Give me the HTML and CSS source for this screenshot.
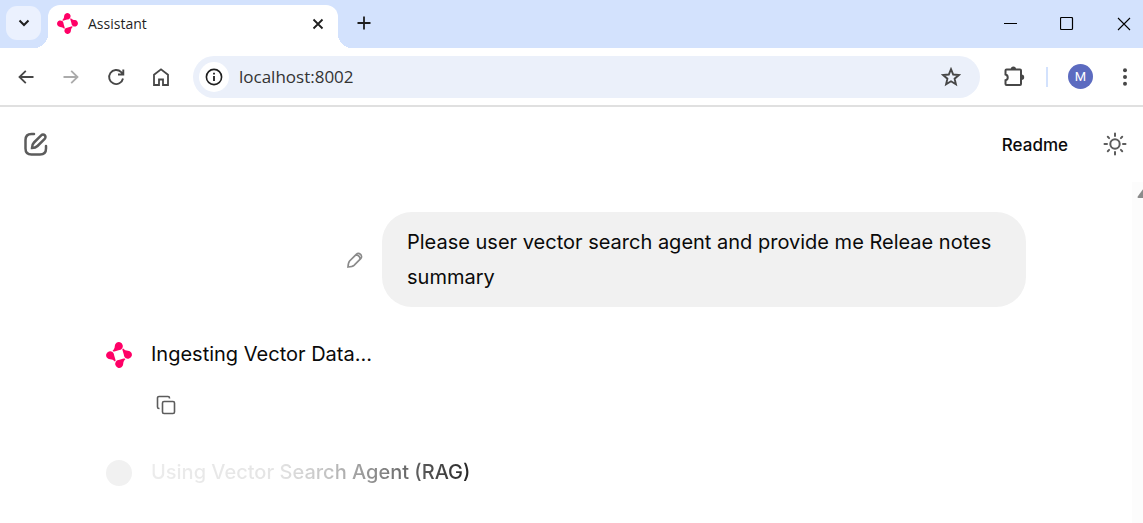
FILE: index.html
```html
<!DOCTYPE html>
<html lang="en">
<head>
    <meta charset="UTF-8">
    <meta name="viewport" content="width=device-width, initial-scale=1.0">
    <title>Assistant</title>
    <link rel="stylesheet" href="styles.css">
</head>
<body>
    <svg class="defs" aria-hidden="true">
        <symbol id="logo" viewBox="0 0 26 26">
            <g id="petal">
                <path d="M8.800 4A4 4 0 1 1 16 6.500C15.300 7.600 14 8 12.500 8.200L8.400 9.400Q6.800 10 6.600 8.800C8.200 7.400 8.700 6 8.800 4Z"/>
            </g>
            <use href="#petal" transform="rotate(90 13 13)"/>
            <use href="#petal" transform="rotate(180 13 13)"/>
            <use href="#petal" transform="rotate(270 13 13)"/>
        </symbol>
    </svg>

    <div class="tabstrip">
        <button class="tab-search" aria-label="Search tabs">
            <svg width="12" height="8" viewBox="0 0 12 8"><path d="M1.500 1.500L6 6l4.500-4.500" stroke-width="2"/></svg>
        </button>
        <div class="tab">
            <svg class="logo" width="21" height="21"><use href="#logo"/></svg>
            <span class="tab-title">Assistant</span>
            <button class="tab-close" aria-label="Close tab">
                <svg width="12" height="12" viewBox="0 0 12 12"><path d="M1.500 1.500l9 9M10.500 1.500l-9 9" stroke-width="1.800"/></svg>
            </button>
        </div>
        <button class="new-tab" aria-label="New tab">
            <svg width="14" height="14" viewBox="0 0 14 14"><path d="M7 .5v13M.5 7h13" stroke-width="1.800"/></svg>
        </button>
        <div class="window-buttons">
            <button aria-label="Minimize"><svg width="14" height="14" viewBox="0 0 14 14"><path d="M1 6.500h13" stroke-width="1"/></svg></button>
            <button aria-label="Maximize"><svg width="14" height="14" viewBox="0 0 14 14"><rect x=".5" y=".5" width="12" height="12" rx="1" stroke-width="1.200"/></svg></button>
            <button aria-label="Close"><svg width="14" height="14" viewBox="0 0 14 14"><path d="M1 1l12 12M13 1L1 13" stroke-width="1.100"/></svg></button>
        </div>
    </div>

    <div class="toolbar">
        <div class="nav">
            <button aria-label="Back"><svg width="18" height="18" viewBox="0 0 18 18"><path d="M16.500 9H2.500M8.800 2.800L2.500 9l6.300 6.200" stroke-width="1.800"/></svg></button>
            <button class="off" aria-label="Forward"><svg width="18" height="18" viewBox="0 0 18 18"><path d="M1.500 9h14M9.200 2.800L15.500 9l-6.300 6.200" stroke-width="1.800"/></svg></button>
            <button aria-label="Reload"><svg width="18" height="18" viewBox="0 0 18 18"><path d="M16 10.500A7 7 0 1 1 14.200 4.200L16 6M16.300 1.500V6.500H11" stroke-width="1.900"/></svg></button>
            <button aria-label="Home"><svg width="18" height="18" viewBox="0 0 18 18"><path d="M2 6.800L9 1.300l7 5.500V17h-5v-5.500H7V17H2z" stroke-width="1.800"/></svg></button>
        </div>
        <div class="omnibox">
            <button class="site-info" aria-label="Site information">
                <svg width="18" height="18" viewBox="0 0 18 18"><circle cx="9" cy="9" r="7.600" stroke-width="1.600"/><path d="M9 8v5M9 4.800v1.800" stroke-width="1.800"/></svg>
            </button>
            <input type="text" value="localhost:8002" aria-label="Address" spellcheck="false">
            <button class="star" aria-label="Bookmark">
                <svg width="20" height="20" viewBox="0 0 20 20"><path d="M10 2.200l2.200 5.300 5.700.5-4.300 3.700 1.300 5.600-4.900-3-4.900 3 1.300-5.600L2.100 8l5.700-.5z" stroke-width="1.900"/></svg>
            </button>
        </div>
        <button class="extensions" aria-label="Extensions">
            <svg width="22" height="22" viewBox="0 0 22 22"><path d="M3.500 3.500H17a1 1 0 0 1 1 1V18a1 1 0 0 1-1 1H3.500a1 1 0 0 1-1-1v-3.700a3 3 0 0 0 0-5.800v-4a1 1 0 0 1 1-1z" stroke-width="2"/><path class="fill" d="M7.800 3a2.600 2.600 0 0 1 5.200 0zM18.500 8.600a2.700 2.700 0 0 1 0 5.400z"/></svg>
        </button>
        <span class="divider"></span>
        <button class="profile" aria-label="Profile">M</button>
        <button class="menu" aria-label="Menu">
            <svg width="6" height="18" viewBox="0 0 6 18"><g class="fill"><circle cx="3" cy="2.200" r="2"/><circle cx="3" cy="9" r="2"/><circle cx="3" cy="15.800" r="2"/></g></svg>
        </button>
    </div>

    <header class="header">
        <button aria-label="New chat">
            <svg width="24" height="24" viewBox="0 0 24 24"><path d="M10 2H7.500C3.500 2 1.500 4 1.500 8v8.500c0 4 2 6 6 6H16c4 0 6-2 6-6V14" stroke-width="2.500"/><path d="M17.200 3.300L10 10.500c-1.400 1.400-2 3-2 5.500 2.500 0 4.100-.6 5.500-2l7.200-7.200c2.400-2.400-1.100-5.900-3.500-3.500z" stroke-width="2.500"/></svg>
        </button>
        <a class="readme" href="#readme">Readme</a>
        <button aria-label="Toggle theme">
            <svg width="24" height="24" viewBox="0 0 24 24"><circle cx="12" cy="12" r="4.700" stroke-width="2"/><path d="M12 1.500v2.500M12 20v2.500M1.500 12H4M20 12h2.500M4.800 4.800l1.300 1.300M17.900 17.900l1.300 1.300M4.800 19.200l1.300-1.300M17.900 6.100l1.300-1.300" stroke-width="2"/></svg>
        </button>
    </header>

    <div class="scroll-area">
        <main class="chat">
            <div class="user-message">
                <button class="edit" aria-label="Edit message">
                    <svg width="16" height="16" viewBox="0 0 16 16"><path d="M9.300 2.300L2.600 9C1.500 10.200 1.200 11.700 1 15c3.300-.2 4.800-.5 6-1.600l6.700-6.700c2.700-2.700-1.700-7.100-4.400-4.400zM8.700 3q4.200.1 4.400 4.300" stroke-width="1.700"/></svg>
                </button>
                <div class="bubble">Please user vector search agent and provide me Releae notes summary</div>
            </div>

            <div class="step">
                <svg class="logo" width="26" height="26"><use href="#logo"/></svg>
                <div class="step-text">Ingesting Vector Data...</div>
            </div>
            <div class="actions">
                <button aria-label="Copy">
                    <svg width="20" height="20" viewBox="0 0 20 20"><rect x="6.500" y="6.500" width="12" height="12" rx="1.500" stroke-width="1.600"/><path d="M3.500 13.500H3A1.500 1.500 0 0 1 1.500 12V3A1.500 1.500 0 0 1 3 1.500h9A1.500 1.500 0 0 1 13.500 3v.5" stroke-width="1.600"/></svg>
                </button>
            </div>

            <div class="step">
                <span class="avatar"></span>
                <div class="step-text loading">Using Vector Search Agent (RAG)</div>
            </div>
        </main>
        <div class="scrollbar">
            <svg width="14" height="10" viewBox="0 0 14 10"><path d="M6 1.200q1-1.200 2 0l5.300 7.300q.6 1.500-.8 1.500H1.500Q.1 10 .7 8.500z"/></svg>
        </div>
    </div>
</body>
</html>
```
FILE: styles.css
```css
* {
    box-sizing: border-box;
}

body {
    margin: 0;
    height: 100vh;
    display: flex;
    flex-direction: column;
    overflow: hidden;
    background-color: white;
    color: #0a0a0a;
    font-family: Inter, sans-serif;
}

button {
    display: flex;
    align-items: center;
    justify-content: center;
    padding: 0;
    border: none;
    background: none;
    color: inherit;
    font: inherit;
    cursor: pointer;
}

svg {
    flex: none;
    fill: none;
    stroke: currentColor;
}

.fill {
    fill: currentColor;
    stroke: none;
}

.defs {
    position: absolute;
    width: 0;
    height: 0;
}

.logo {
    fill: #ff0066;
    stroke: none;
}

/* tab strip */
.tabstrip {
    display: flex;
    align-items: center;
    flex: none;
    height: 48px;
    padding-left: 6px;
    background-color: #d3e2fd;
    color: #1f1f1f;
}

.tab-search {
    width: 35px;
    height: 34px;
    margin-bottom: 2px;
    border-radius: 11px;
    background-color: #ebf1fe;
}

.tab {
    position: relative;
    display: flex;
    align-items: center;
    align-self: flex-end;
    width: 290px;
    height: 43px;
    margin-left: 7px;
    padding: 0 11px 6px 9px;
    border-radius: 12px 12px 0 0;
    background-color: white;
}

/* curved feet of the active tab */
.tab::before,
.tab::after {
    content: "";
    position: absolute;
    bottom: 0;
    width: 14px;
    height: 14px;
}

.tab::before {
    right: 100%;
    background: radial-gradient(circle at 0 0, transparent 14px, white 14px);
}

.tab::after {
    left: 100%;
    background: radial-gradient(circle at 100% 0, transparent 14px, white 14px);
}

.tab-title {
    flex: 1;
    padding-left: 10px;
    font-family: "Open Sans", sans-serif;
    font-size: 14px;
}

.tab-close,
.new-tab {
    width: 18px;
    height: 18px;
}

.new-tab {
    margin: 0 0 2px 17px;
}

.window-buttons {
    display: flex;
    gap: 43px;
    margin-left: auto;
    padding-right: 12px;
    color: black;
}

/* toolbar */
.toolbar {
    display: flex;
    align-items: center;
    flex: none;
    height: 59px;
    padding: 0 15px 0 17px;
    border-bottom: 2px solid #e0e0e0;
    color: #474747;
}

.nav {
    display: flex;
    gap: 27px;
}

.off {
    color: #ababab;
}

.omnibox {
    display: flex;
    align-items: center;
    flex: 1;
    height: 42px;
    margin-left: 23px;
    padding: 0 19px 0 6px;
    border-radius: 21px;
    background-color: #ebf0fa;
}

.site-info {
    width: 30px;
    height: 30px;
    border-radius: 50%;
    background-color: white;
    color: #1f1f1f;
}

.omnibox input {
    flex: 1;
    min-width: 0;
    padding: 0 0 0 10px;
    border: none;
    outline: none;
    background: none;
    color: #333333;
    font-family: "Open Sans", sans-serif;
    font-size: 17px;
}

.extensions {
    margin-left: 23px;
}

.divider {
    width: 2px;
    height: 20px;
    margin: 0 20px 0 21px;
    background-color: #d3e2fd;
}

.profile {
    width: 25px;
    height: 25px;
    border-radius: 50%;
    background-color: #5c6bc0;
    color: white;
    font-family: Roboto, sans-serif;
    font-size: 13px;
}

.menu {
    margin-left: 29px;
}

/* chat page */
.header {
    display: flex;
    align-items: center;
    flex: none;
    height: 75px;
    padding: 0 16px 2px 24px;
    color: #5c5c5c;
}

.header svg {
    stroke-linecap: round;
}

.readme {
    margin: 0 35px 0 auto;
    padding-top: 2px;
    color: #0a0a0a;
    font-size: 17px;
    font-weight: 500;
    text-decoration: none;
}

.scroll-area {
    display: flex;
    flex: 1;
    min-height: 0;
}

.chat {
    flex: 1;
    max-width: 920px;
    margin: 0 auto;
    padding-top: 30px;
    font-size: 20px;
    line-height: 35px;
}

.user-message {
    display: flex;
    align-items: center;
    justify-content: flex-end;
    gap: 19px;
}

.edit {
    color: #8a8a8a;
}

.bubble {
    width: 70%;
    padding: 13px 25px 12px;
    border-radius: 30px;
    background-color: #f1f1f1;
}

.step {
    display: flex;
    align-items: center;
    gap: 19px;
    margin-top: 30px;
}

.actions {
    display: flex;
    margin: 23px 0 0 50px;
    color: #5c5c5c;
}

.actions + .step {
    margin-top: 40px;
}

.avatar {
    width: 26px;
    height: 26px;
    border-radius: 50%;
    background-color: #f1f1f1;
}

.loading {
    font-weight: 500;
    color: transparent;
    background: linear-gradient(90deg, #ececec 0%, #e4e4e4 40%, #c4c4c4 55%, #707070 78%, #262626 100%);
    -webkit-background-clip: text;
    background-clip: text;
}

.scrollbar {
    flex: none;
    width: 11px;
    padding: 6px 0 0 5px;
    overflow: hidden;
    background-color: #fcfcfc;
}

.scrollbar svg {
    display: block;
    fill: #8b8b8b;
    stroke: none;
}
```
